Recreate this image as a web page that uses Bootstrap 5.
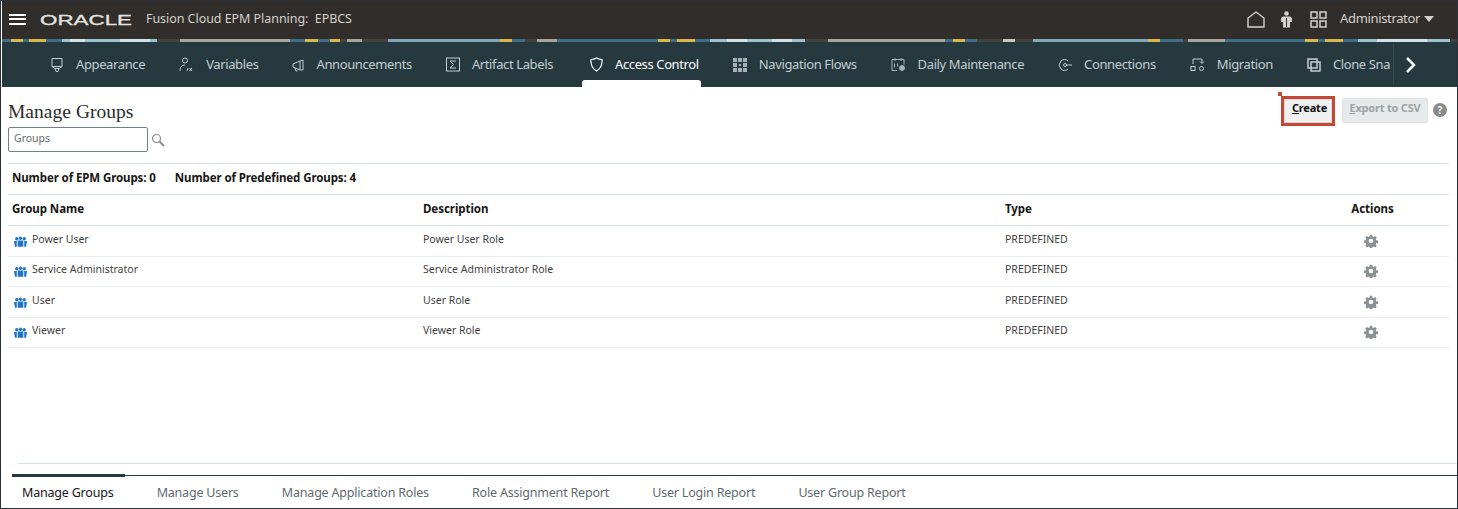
<!DOCTYPE html>
<html lang="en">
<head>
  <meta charset="UTF-8">
  <title>Manage Groups</title>
  <link href="https://cdn.jsdelivr.net/npm/bootstrap@5.3.0/dist/css/bootstrap.min.css" rel="stylesheet">
  <style>
    html, body { height: 100%; }
    body {
      font-family: "Noto Sans", "Open Sans", sans-serif;
      font-size: 11px;
      color: #333;
      background: #fff;
      overflow: hidden;
    }
    .shell {
      height: 509px;
      border: solid #2b3138;
      border-width: 1px;
      overflow: hidden;
    }
    .top-bar { height: 38px; background: #312d2a; color: #d4d0cb; padding: 0 7px 2px; margin-left: 1px; }
    .top-bar .oracle { margin-left: 14px; }
    .top-bar .product { font-size: 12.5px; margin-left: 10px; letter-spacing: -.05px; }
    .top-bar .user { font-size: 13px; letter-spacing: -.35px; margin-left: 13px; }
    .top-bar .apps { margin-left: 18px; }
    .menu-btn { width: 17px; height: 11px; border: solid #fff; border-width: 2px 0; position: relative; }
    .menu-btn::after { content: ""; position: absolute; left: 0; right: 0; top: 2.5px; height: 2px; background: #fff; }
    .caret { width: 0; height: 0; border: 5px solid transparent; border-top: 6px solid #d4d0cb; border-bottom: 0; }
    .strip {
      height: 3px;
      margin-left: 1px;
      background: linear-gradient(90deg,
        #3f6f85 0 9px, #d9b64a 9px 21px, #3f6f85 21px 27px, #d9b64a 27px 44px, #3f6f85 44px 60px,
        #9fc4d1 60px 68px, #cfe3ea 68px 83px, #9fc4d1 83px 118px, #cfe3ea 118px 148px, #9fc4d1 148px 155px,
        #45423e 155px 178px, #a9a49c 178px 288px, #3f6f85 288px 303px, #d9b64a 303px 316px, #3f6f85 316px 328px,
        #d9b64a 328px 338px, #45423e 338px 345px, #a9a49c 345px 360px, #45423e 360px 386px, #7fa9ba 386px 498px,
        #d9b64a 498px 510px, #3f6f85 510px 523px, #45423e 523px 535px, #a9a49c 535px 555px, #3f6f85 555px 656px,
        #d9b64a 656px 668px, #3f6f85 668px 675px, #d9b64a 675px 693px, #3f6f85 693px 708px, #9fc4d1 708px 725px,
        #cfe3ea 725px 745px, #9fc4d1 745px 770px, #cfe3ea 770px 790px, #9fc4d1 790px 803px, #45423e 803px 826px,
        #a9a49c 826px 943px, #3f6f85 943px 951px, #d9b64a 951px 963px, #3f6f85 963px 975px, #45423e 975px 1001px,
        #c9c4bc 1001px 1013px, #45423e 1013px 1031px, #7fa9ba 1031px 1146px, #d9b64a 1146px 1158px, #3f6f85 1158px 1181px,
        #45423e 1181px 1186px, #a9a49c 1186px 1223px, #3f6f85 1223px 1303px, #d9b64a 1303px 1316px, #3f6f85 1316px 1323px,
        #d9b64a 1323px 1341px, #3f6f85 1341px 1356px, #9fc4d1 1356px 1375px, #cfe3ea 1375px 1425px, #9fc4d1 1425px 1448px,
        #45423e 1448px 1456px);
    }
    .tab-bar { height: 45px; background: #25393f; position: relative; margin-left: 1px; }
    .tab-bar .nav { flex-wrap: nowrap; padding-left: 48px; gap: 34px; width: 1388px; overflow: hidden; height: 45px; }
    .tab-bar .nav-link {
      padding: 0;
      height: 45px;
      gap: 12px;
      font-size: 13px;
      letter-spacing: -.38px;
      color: #c4cdd0;
      white-space: nowrap;
      display: flex;
      align-items: center;
      position: relative;
    }
    .tab-bar .nav-link.active { color: #fff; margin-left: 3px; }
    .tab-bar .nav-link.active::after {
      content: "";
      position: absolute;
      left: -8px;
      right: -2px;
      top: 38px;
      height: 7px;
      background: #fff;
      border-radius: 3px 3px 0 0;
    }
    .tab-bar svg { flex: none; }
    .tab-next { position: absolute; right: 0; top: 0; width: 64px; height: 45px; background: #25393f; }
    .tab-next::before { content: ""; position: absolute; left: 0; top: 2px; bottom: 2px; width: 1px; background: #33484e; }
    .tab-next svg { margin-left: 11px; }
    .page-title { font-family: "Liberation Serif", serif; font-size: 19.5px; font-weight: 400; color: #2b2b2b; margin: 0 0 4px; line-height: 22px; letter-spacing: .03px; }
    .title-block { padding-top: 14px; }
    .content { padding: 0 8px 0 7px; height: 376px; }
    .search-box { width: 140px; height: 25px; border: 1px solid #6f8288; border-radius: 2px; padding: 1px 5px; font-size: 10.5px; color: #6b6b6b; line-height: 19px; }
    .search-icon { margin-left: 3px; }
    .actions-block { padding-top: 11px; padding-right: 2px; }
    .btn-create, .btn-export {
      font-size: 11px;
      font-weight: 700;
      letter-spacing: -.2px;
      padding: 0 0 4px;
      font-family: "Noto Sans", sans-serif;
    }
    .btn-create { width: 48px; height: 24px; margin-top: 1px; padding: 0 0 6px 3px; background: #eff1f1; border: 1px solid #d5d9da; border-radius: 0; color: #111; position: relative; outline: 3px solid #c74634; }
    .btn-create::before { content: ""; position: absolute; left: -7px; top: -8px; width: 4px; height: 4px; background: #c74634; }
    .btn-export { height: 25px; background: #e7eaea; border: 1px solid #dfe3e3; border-radius: 2px; color: #9ba3a5; width: 86px; margin-left: 10px; }
    .help { width: 14px; height: 14px; border-radius: 50%; background: #8a8a8a; color: #fff; font-size: 10px; font-weight: 700; line-height: 14px; text-align: center; margin: 5px 0 0 5px; }
    .stats { height: 31px; border-top: 1px solid #d6dfe4; font-size: 11.5px; font-weight: 700; color: #161513; gap: 19px; padding: 0 0 2px 4px; margin-top: 11px; letter-spacing: -.1px; }
    .groups { margin: 0; font-size: 10.5px; table-layout: fixed; width: 100%; }
    .groups th, .groups td { padding: 0 0 0 4px; vertical-align: middle; color: #3f3f3f; border-bottom: 1px solid #e9ecee; height: 30.5px; }
    .groups thead th { font-size: 11.5px; font-weight: 700; letter-spacing: -.05px; color: #161513; height: 31px; padding-bottom: 2px; border-top: 1px solid #d6dfe4; border-bottom: 1px solid #d6dfe4; }
    .groups td { padding-bottom: 2px; }
    .groups .act { text-align: center; }
    .groups thead th.act { padding: 0 37px 2px 0; }
    .groups tbody td.act { padding: 0 41px 1px 0; }
    .name-cell { gap: 5px; }
    .name-cell svg { margin: 4px 0 0 2px; }
    .bottom-tabs { border-top: 1px solid #d6dfe4; margin-left: 17px; height: 12px; }
    .sub-tabs { border-top: 1px solid #25393f; margin-left: 11px; height: 32px; padding-left: 10px; gap: 43.2px; position: relative; }
    .sub-tabs::before { content: ""; position: absolute; left: 0; top: -2px; width: 113px; height: 3px; background: #25393f; }
    .sub-tabs .nav-link { padding: 0; font-size: 12.5px; letter-spacing: -.2px; color: #5f6a70; line-height: 33px; }
    .sub-tabs .nav-link.active { color: #161513; }
  </style>
</head>
<body>
  <div class="shell d-flex flex-column">
    <header class="top-bar d-flex align-items-center">
      <span class="menu-btn"></span>
      <svg class="oracle" width="96" height="14" viewBox="0 0 96 14"><text x="0" y="12.500" textLength="92" lengthAdjust="spacingAndGlyphs" font-family="Liberation Sans" font-size="15" fill="#e6e4e1" stroke="#e6e4e1" stroke-width=".3">ORACLE</text></svg>
      <span class="product">Fusion Cloud EPM Planning:&nbsp; EPBCS</span>
      <div class="ms-auto d-flex align-items-center">
        <svg width="18" height="17" viewBox="0 0 18 17" fill="none" stroke="#d4d0cb" stroke-width="1.4"><path d="M1 7 9 1l8 6v9H1z"/></svg>
        <svg class="ms-3" width="11" height="17" viewBox="0 0 11 17" fill="#d4d0cb"><circle cx="5.500" cy="2.500" r="2.300"/><path d="M2 5.500h7L11 7v4H9v5.500H2V11H0V7z"/><path d="M5 7h1v9H5z" fill="#312d2a"/></svg>
        <svg class="apps" width="17" height="17" viewBox="0 0 17 17" fill="none" stroke="#d4d0cb" stroke-width="1.5"><rect x="1" y="1" width="6" height="6"/><rect x="10" y="1" width="6" height="6"/><rect x="1" y="10" width="6" height="6"/><rect x="10" y="10" width="6" height="6"/></svg>
        <span class="user">Administrator</span>
        <span class="caret ms-1 me-3"></span>
      </div>
    </header>
    <div class="strip"></div>
    <div class="tab-bar">
      <nav class="nav">
        <a class="nav-link" href="#"><svg width="14" height="16" viewBox="0 0 14 16" fill="none" stroke="#c4cdd0"><path d="M2 1.500h10v8H2zM2 9.500l3 2h4l3-2M5 11.500l1 3h2l1-3"/></svg>Appearance</a>
        <a class="nav-link" href="#"><svg width="15" height="16" viewBox="0 0 15 16" fill="none" stroke="#c4cdd0"><circle cx="6" cy="3.500" r="2.500"/><path d="M1 14c0-4 2-6 5-6M8 14l1-3M10.500 11l2.500 3M13 11l-2.500 3"/></svg>Variables</a>
        <a class="nav-link" href="#"><svg width="12" height="14" viewBox="0 0 12 14" fill="none" stroke="#c4cdd0"><path d="M1 6v3l7 3V3zM3 10l1 3h1.500M8 3l3-1v10H8"/></svg>Announcements</a>
        <a class="nav-link" href="#"><svg width="14" height="15" viewBox="0 0 14 15" fill="none" stroke="#c4cdd0"><rect x=".5" y="1" width="13" height="13"/><path d="M10 4H4l3.500 3.500L4 11h6"/></svg>Artifact Labels</a>
        <a class="nav-link active" href="#"><svg width="13" height="15" viewBox="0 0 13 15" fill="none" stroke="#fff" stroke-width="1.200"><path d="M1 2.500C3 2.500 5 1.800 6.500 1 8 1.800 10 2.500 12 2.500 12.500 8 10 12 6.500 14 3 12 .5 8 1 2.500z"/></svg>Access Control</a>
        <a class="nav-link" href="#"><svg width="14" height="14" viewBox="0 0 14 14" fill="#a9b2b5"><path d="M0 0h4v4H0zM5 0h4v4H5zM10 0h4v4h-4zM0 5h4v4H0zM10 5h4v4h-4zM0 10h4v4H0zM5 10h4v4H5zM10 10h4v4h-4z"/><path d="M6 6h2v2H6z"/></svg>Navigation Flows</a>
        <a class="nav-link" href="#"><svg width="15" height="15" viewBox="0 0 15 15" fill="none" stroke="#a9b2b5"><path d="M6 13.500H1v-11h12v5M4 1v3M10 1v3M3.500 6.500v4M6.500 6.500v3"/><circle cx="11" cy="11" r="2.500" fill="#a9b2b5"/></svg>Daily Maintenance</a>
        <a class="nav-link" href="#"><svg width="14" height="14" viewBox="0 0 14 14" fill="none" stroke="#c4cdd0"><circle cx="7" cy="7" r="1.500"/><path d="M10 3A5 5 0 0 0 3 3L1 7l2 4a5 5 0 0 0 7 0M8.500 7H14"/></svg>Connections</a>
        <a class="nav-link" href="#"><svg width="15" height="15" viewBox="0 0 15 15" fill="none" stroke="#c4cdd0"><rect x="1" y="9.500" width="4" height="4"/><circle cx="11.500" cy="11.500" r="2"/><path d="M3 7V2h9v4M10 4.500l2 2 2-2"/></svg>Migration</a>
        <a class="nav-link" href="#"><svg width="14" height="14" viewBox="0 0 14 14" fill="none" stroke="#c4cdd0" stroke-width="1.500"><rect x="1" y="1" width="9" height="9"/><rect x="4" y="4" width="9" height="9"/></svg>Clone Snapshot</a>
      </nav>
      <div class="tab-next d-flex align-items-center">
        <svg width="12" height="16" viewBox="0 0 12 16" fill="none" stroke="#fff" stroke-width="2.500"><path d="m3 1 7 7-7 7"/></svg>
      </div>
    </div>
    <main class="content">
      <div class="d-flex justify-content-between align-items-start">
        <div class="title-block">
          <h1 class="page-title">Manage Groups</h1>
          <div class="d-flex align-items-center">
            <div class="search-box">Groups</div>
            <svg class="search-icon" width="14" height="14" viewBox="0 0 14 14" fill="none" stroke="#8c8c8c" stroke-width="1.200"><circle cx="5.500" cy="5.500" r="4"/><path d="m8.500 8.500 4.500 4.500" stroke-width="2"/></svg>
          </div>
        </div>
        <div class="actions-block d-flex align-items-start">
          <button class="btn-create" type="button"><u>C</u>reate</button>
          <button class="btn-export" type="button"><u>E</u>xport to CSV</button>
          <span class="help">?</span>
        </div>
      </div>
      <div class="stats d-flex align-items-center">
        <span>Number of EPM Groups: 0</span>
        <span>Number of Predefined Groups: 4</span>
      </div>
      <table class="groups">
        <colgroup>
          <col style="width: 411px"><col style="width: 582px"><col style="width: 332px"><col>
        </colgroup>
        <thead>
          <tr><th>Group Name</th><th>Description</th><th>Type</th><th class="act">Actions</th></tr>
        </thead>
        <tbody id="rows"></tbody>
      </table>
    </main>
    <div class="bottom-tabs"></div>
    <nav class="nav sub-tabs">
      <a class="nav-link active" href="#">Manage Groups</a>
      <a class="nav-link" href="#">Manage Users</a>
      <a class="nav-link" href="#">Manage Application Roles</a>
      <a class="nav-link" href="#">Role Assignment Report</a>
      <a class="nav-link" href="#">User Login Report</a>
      <a class="nav-link" href="#">User Group Report</a>
    </nav>
  </div>

  <script>
    const groupIcon = '<svg width="13" height="12" viewBox="0 0 14 12" fill="#1f74c9"><circle cx="3" cy="2.500" r="1.800"/><circle cx="7" cy="2" r="1.800"/><circle cx="11" cy="2.500" r="1.800"/><path d="M0 5h3v6H1zM11 5h3l-1 6h-2zM4 4.500h6V11H4z"/></svg>';
    const gearIcon = '<svg width="14" height="14" viewBox="-1 0 18 16"><path fill="#8b9094" fill-rule="evenodd" d="M6.500 0h3l.4 2.200 1.500.6 1.900-1.300 2.100 2.100-1.300 1.900.6 1.500 2.300.5v3l-2.300.4-.6 1.500 1.300 1.900-2.100 2.100-1.900-1.300-1.500.6-.4 2.300h-3l-.4-2.300-1.500-.6-1.900 1.300-2.100-2.100 1.300-1.900-.6-1.500-2.300-.4v-3l2.300-.5.600-1.500L.6 3.600l2.100-2.100 1.900 1.300 1.500-.6zM8 5a3 3 0 1 0 0 6 3 3 0 0 0 0-6z"/></svg>';
    const groups = [
      ["Power User", "Power User Role"],
      ["Service Administrator", "Service Administrator Role"],
      ["User", "User Role"],
      ["Viewer", "Viewer Role"]
    ];
    document.getElementById("rows").innerHTML = groups.map(g =>
      `<tr><td><div class="name-cell d-flex align-items-center">${groupIcon}${g[0]}</div></td><td>${g[1]}</td><td>PREDEFINED</td><td class="act">${gearIcon}</td></tr>`
    ).join("");
  </script>
  <script src="https://cdn.jsdelivr.net/npm/bootstrap@5.3.0/dist/js/bootstrap.bundle.min.js"></script>
</body>
</html>
